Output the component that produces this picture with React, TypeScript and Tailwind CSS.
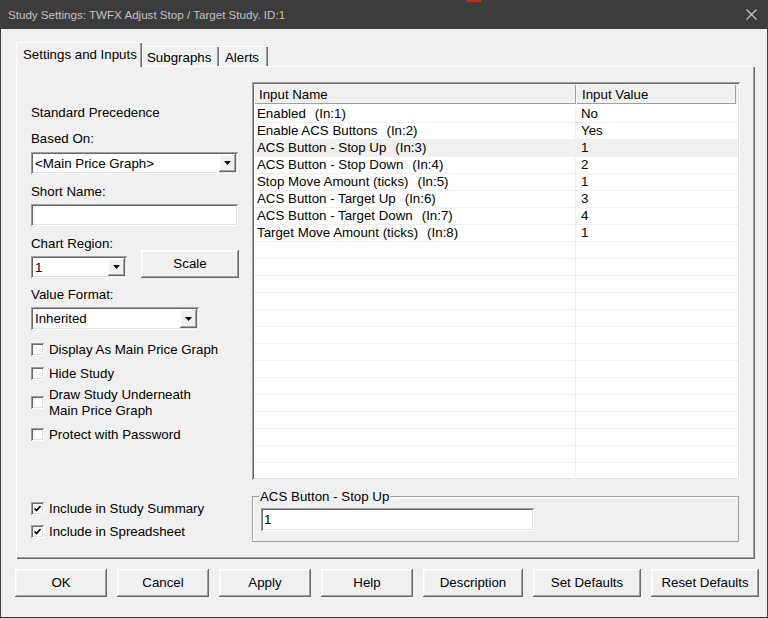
import React from 'react';

const raised =
  'shadow-[inset_-1px_-1px_#696969,inset_1px_1px_#ffffff,inset_-2px_-2px_#a0a0a0,inset_2px_2px_#f8f8f8]';
const sunken =
  'shadow-[inset_1px_1px_#a0a0a0,inset_-1px_-1px_#ffffff,inset_2px_2px_#696969,inset_-2px_-2px_#e3e3e3]';

const inputs = [
  ['Enabled', '(In:1)', 'No'],
  ['Enable ACS Buttons', '(In:2)', 'Yes'],
  ['ACS Button - Stop Up', '(In:3)', '1'],
  ['ACS Button - Stop Down', '(In:4)', '2'],
  ['Stop Move Amount (ticks)', '(In:5)', '1'],
  ['ACS Button - Target Up', '(In:6)', '3'],
  ['ACS Button - Target Down', '(In:7)', '4'],
  ['Target Move Amount (ticks)', '(In:8)', '1'],
];

function Combo({ value, className }: { value: string; className: string }) {
  return (
    <div className={`flex bg-white ${sunken} ${className}`}>
      <span className="flex-1 pl-[4px] pt-px self-center leading-4">{value}</span>
      <span className={`w-[17px] my-[2px] mr-[2px] flex items-center justify-center bg-[#f0f0f0] ${raised}`}>
        <svg width="7" height="4" viewBox="0 0 7 4">
          <path d="M0 0h7L3.5 4z" fill="#000" />
        </svg>
      </span>
    </div>
  );
}

function Checkbox({ checked, children, className }: { checked?: boolean; children: React.ReactNode; className: string }) {
  return (
    <div className={`flex items-center gap-[5px] ${className}`}>
      <span className={`w-[13px] h-[13px] shrink-0 bg-white flex items-center justify-center ${sunken}`}>
        {checked && (
          <svg width="9" height="9" viewBox="0 0 9 9">
            <path d="M1.5 4.5L3.5 6.5L7.5 2" fill="none" stroke="#000" strokeWidth={1.7} />
          </svg>
        )}
      </span>
      <span className="leading-4 pt-px">{children}</span>
    </div>
  );
}

function Button({ label, className }: { label: string; className: string }) {
  return (
    <button className={`h-[28px] bg-[#f0f0f0] flex items-center justify-center ${raised} ${className}`}>
      {label}
    </button>
  );
}

export default function App() {
  const blanks = Array.from({ length: 14 });

  return (
    <div className="relative w-[768px] h-[618px] flex flex-col bg-[#f0f0f0] text-[13.3px] text-black font-['Liberation_Sans',Arial,sans-serif] overflow-hidden">
      {/* title bar */}
      <div className="h-[29px] shrink-0 bg-[#3c3c3c] flex items-center pl-[8px]">
        <span className="text-[11.6px] text-[#c2c2c2]">Study Settings: TWFX Adjust Stop / Target Study. ID:1</span>
        <svg className="ml-auto mr-[11px]" width="11" height="11" viewBox="0 0 11 11">
          <path d="M0.5 0.5L10.5 10.5M10.5 0.5L0.5 10.5" stroke="#cfcfcf" strokeWidth={1.1} />
        </svg>
      </div>
      <span className="absolute top-0 left-[467px] w-[14px] h-[2px] bg-[#c42b1c]" />

      <div className="flex-1 flex flex-col border-x border-b border-[#3c3c3c]">
        {/* tabs */}
        <div className="mt-[13px] ml-[15px] h-[24px] flex items-end">
          <div className="relative z-10 -mb-px h-[25px] w-[126px] bg-[#f0f0f0] pl-[7px] pt-[5px] leading-4 shadow-[inset_1px_1px_#ffffff,inset_-1px_0_#696969,inset_-2px_0_#a0a0a0]">
            Settings and Inputs
          </div>
          <div className="h-[20px] w-[77px] pl-[5px] pt-[4px] leading-4 shadow-[inset_1px_1px_#ffffff,inset_-1px_0_#696969,inset_-2px_0_#a0a0a0]">
            Subgraphs
          </div>
          <div className="h-[20px] w-[49px] pl-[6px] pt-[4px] leading-4 shadow-[inset_1px_1px_#ffffff,inset_-1px_0_#696969,inset_-2px_0_#a0a0a0]">
            Alerts
          </div>
        </div>

        {/* tab panel */}
        <div className="ml-[15px] w-[739px] h-[493px] flex pl-[15px] shadow-[inset_1px_1px_#ffffff,inset_-1px_-1px_#696969,inset_-2px_-2px_#a0a0a0]">
          <div className="w-[221px] flex flex-col">
            <div className="mt-[38px] pt-px leading-4">Standard Precedence</div>
            <div className="mt-[9px] pt-px leading-4">Based On:</div>
            <Combo value="<Main Price Graph>" className="mt-[5px] h-[22px] w-[207px]" />
            <div className="mt-[9px] pt-px leading-4">Short Name:</div>
            <div className={`mt-[4px] h-[22px] w-[207px] bg-white ${sunken}`} />
            <div className="mt-[9px] pt-px leading-4">Chart Region:</div>
            <div className="-mt-px h-[27px] flex items-end">
              <Combo value="1" className="h-[22px] w-[96px]" />
              <Button label="Scale" className="ml-[14px] h-[27px] w-[98px]" />
            </div>
            <div className="mt-[8px] pt-px leading-4">Value Format:</div>
            <Combo value="Inherited" className="mt-[4px] h-[23px] w-[168px]" />
            <Checkbox className="mt-[11px]">Display As Main Price Graph</Checkbox>
            <Checkbox className="mt-[7px]">Hide Study</Checkbox>
            <Checkbox className="mt-[4px]">
              Draw Study Underneath
              <br />
              Main Price Graph
            </Checkbox>
            <Checkbox className="mt-[7px]">Protect with Password</Checkbox>
            <Checkbox checked className="mt-[57px]">Include in Study Summary</Checkbox>
            <Checkbox checked className="mt-[6px]">Include in Spreadsheet</Checkbox>
          </div>

          <div className="w-[488px] flex flex-col">
            {/* inputs list */}
            <div className={`mt-[16px] h-[398px] bg-white p-[2px] overflow-hidden ${sunken}`}>
              <div className="h-[20px] flex bg-[#f0f0f0]">
                <div className="w-[322px] pl-[5px] leading-[21px] shadow-[inset_1px_1px_#ffffff,inset_-1px_-1px_#a0a0a0]">
                  Input Name
                </div>
                <div className="w-[160px] pl-[6px] leading-[21px] shadow-[inset_1px_1px_#ffffff,inset_-1px_-1px_#a0a0a0]">
                  Input Value
                </div>
              </div>
              <div className="mt-[2px]">
                {inputs.map(([name, id, value], i) => (
                  <div
                    key={id}
                    className={`h-[17px] flex border-b border-[#f0f0f0] ${i === 2 ? 'bg-[#f0f0f0]' : ''}`}
                  >
                    <div className="w-[322px] pl-[3px] leading-4 border-r border-[#f0f0f0] whitespace-nowrap">
                      {name}
                      <span className="pl-[9px]">{id}</span>
                    </div>
                    <div className="flex-1 pl-[5px] leading-4">{value}</div>
                  </div>
                ))}
                {blanks.map((_, i) => (
                  <div key={i} className="h-[17px] flex border-b border-[#f0f0f0]">
                    <div className="w-[322px] border-r border-[#f0f0f0]" />
                  </div>
                ))}
              </div>
            </div>

            {/* selected input editor */}
            <div className="relative mt-[16px] h-[46px] w-[487px] border border-[#a0a0a0] shadow-[inset_1px_1px_#ffffff] flex flex-col">
              <span className="absolute -top-[8px] left-[6px] px-px bg-[#f0f0f0] leading-4">ACS Button - Stop Up</span>
              <div className={`mt-[11px] ml-[8px] h-[23px] w-[273px] bg-white pl-[3px] leading-[24px] ${sunken}`}>1</div>
            </div>
          </div>
        </div>

        {/* dialog buttons */}
        <div className="mt-[10px] ml-[14px] flex gap-[10px]">
          <Button label="OK" className="w-[92px]" />
          <Button label="Cancel" className="w-[92px]" />
          <Button label="Apply" className="w-[92px]" />
          <Button label="Help" className="w-[92px]" />
          <Button label="Description" className="w-[100px]" />
          <Button label="Set Defaults" className="w-[108px]" />
          <Button label="Reset Defaults" className="w-[108px]" />
        </div>
      </div>
    </div>
  );
}
